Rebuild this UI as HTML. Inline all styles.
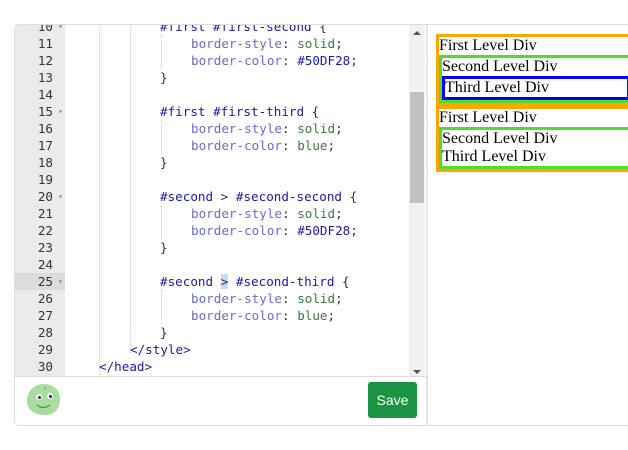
<!DOCTYPE html>
<html><head><style>
body{margin:0;width:628px;height:450px;background:#fff;overflow:hidden;position:relative;font-family:"Liberation Sans",sans-serif}
.box{position:absolute;left:14px;top:24px;width:620px;height:400px;border:1px solid #ddd;border-radius:5px;overflow:hidden}
.gut{position:absolute;left:0;top:0;width:50px;height:351px;background:#ebebeb}
.code{position:absolute;left:0;top:-7px;width:395px;height:358px;overflow:hidden;font-family:"DejaVu Sans Mono",monospace;font-size:12.6px}
.ln{height:17px;line-height:17px;white-space:pre;position:relative}
.n{display:inline-block;width:50px;text-align:right;padding-right:12px;box-sizing:border-box;color:#333;position:relative}
.n.f:after{content:"▾";position:absolute;right:2px;font-size:8px;color:#888}
.hl .n{background:#dcdcdc}
.t{position:absolute;left:84px;top:0}
.s{color:#1a1aa6}.p{color:#6a6acd}.v{color:#3a7a3a}.b{color:#333}
.g{position:absolute;width:0;border-left:1px dotted #ccc}
.sb{position:absolute;left:394px;top:0;width:16px;height:351px;background:#f1f1f1}
.th{position:absolute;left:395px;top:67px;width:14px;height:111px;background:#c1c1c1}
.bot{position:absolute;left:0;top:351px;width:411px;height:49px;border-top:1px solid #ddd}
.save{position:absolute;left:353px;top:5px;width:49px;height:36px;background:#1a9443;border-radius:3px;color:#fff;font-size:14px;line-height:36px;text-align:center}
.div{position:absolute;left:411px;top:0;width:2px;height:400px;background:#e5e5e5}
.pv{position:absolute;left:436px;top:34px;width:200px;font-family:"Liberation Serif",serif;font-size:16px;line-height:18px;color:#000}
.o{border:3px solid orange}.gr{border:3px solid #50DF28}.bl{border:3px solid blue}
</style></head><body>
<div class="box">
<div class="gut"></div>
<div class="code">
<div class="g" style="left:84px;top:0;height:359px"></div>
<div class="g" style="left:115px;top:0;height:335px"></div>
<div class="g" style="left:146px;top:17px;height:34px"></div>
<div class="g" style="left:146px;top:102px;height:34px"></div>
<div class="g" style="left:146px;top:187px;height:34px"></div>
<div class="g" style="left:146px;top:272px;height:34px"></div>
<div class="ln"><span class="n f">10</span><span class="t" style="left:145px"><span class="s">#first #first-second</span> <span class="b">{</span></span></div>
<div class="ln"><span class="n">11</span><span class="t" style="left:176px"><span class="p">border-style</span><span class="b">:</span> <span class="v">solid</span><span class="b">;</span></span></div>
<div class="ln"><span class="n">12</span><span class="t" style="left:176px"><span class="p">border-color</span><span class="b">:</span> <span class="s">#50DF28</span><span class="b">;</span></span></div>
<div class="ln"><span class="n">13</span><span class="t" style="left:145px"><span class="b">}</span></span></div>
<div class="ln"><span class="n">14</span></div>
<div class="ln"><span class="n f">15</span><span class="t" style="left:145px"><span class="s">#first #first-third</span> <span class="b">{</span></span></div>
<div class="ln"><span class="n">16</span><span class="t" style="left:176px"><span class="p">border-style</span><span class="b">:</span> <span class="v">solid</span><span class="b">;</span></span></div>
<div class="ln"><span class="n">17</span><span class="t" style="left:176px"><span class="p">border-color</span><span class="b">:</span> <span class="v">blue</span><span class="b">;</span></span></div>
<div class="ln"><span class="n">18</span><span class="t" style="left:145px"><span class="b">}</span></span></div>
<div class="ln"><span class="n">19</span></div>
<div class="ln"><span class="n f">20</span><span class="t" style="left:145px"><span class="s">#second</span> <span class="b">&gt;</span> <span class="s">#second-second</span> <span class="b">{</span></span></div>
<div class="ln"><span class="n">21</span><span class="t" style="left:176px"><span class="p">border-style</span><span class="b">:</span> <span class="v">solid</span><span class="b">;</span></span></div>
<div class="ln"><span class="n">22</span><span class="t" style="left:176px"><span class="p">border-color</span><span class="b">:</span> <span class="s">#50DF28</span><span class="b">;</span></span></div>
<div class="ln"><span class="n">23</span><span class="t" style="left:145px"><span class="b">}</span></span></div>
<div class="ln"><span class="n">24</span></div>
<div class="ln hl"><span class="n f">25</span><span class="t" style="left:145px"><span class="s">#second</span> <span class="b" style="background:#c6dcf5">&gt;</span> <span class="s">#second-third</span> <span class="b">{</span></span></div>
<div class="ln"><span class="n">26</span><span class="t" style="left:176px"><span class="p">border-style</span><span class="b">:</span> <span class="v">solid</span><span class="b">;</span></span></div>
<div class="ln"><span class="n">27</span><span class="t" style="left:176px"><span class="p">border-color</span><span class="b">:</span> <span class="v">blue</span><span class="b">;</span></span></div>
<div class="ln"><span class="n">28</span><span class="t" style="left:145px"><span class="b">}</span></span></div>
<div class="ln"><span class="n">29</span><span class="t" style="left:115px"><span class="s">&lt;/style&gt;</span></span></div>
<div class="ln"><span class="n">30</span><span class="t" style="left:84px"><span class="s">&lt;/head&gt;</span></span></div>
</div>
<div class="sb"><div style="position:absolute;left:4px;top:6px;border:4px solid transparent;border-bottom:4px solid #555;border-top:0"></div><div style="position:absolute;left:4px;top:345px;border:4px solid transparent;border-top:4px solid #555;border-bottom:0"></div></div>
<div class="th"></div>
<div class="bot">
<svg style="position:absolute;left:10px;top:5px" width="38" height="36" viewBox="0 0 38 36"><path d="M19 2C29 2 36 9 35 19C34 29 27 34 17 33C7 32 1 26 2 17C3 8 10 2 19 2Z" fill="#a8dca0"/><circle cx="14" cy="15" r="3" fill="#fff"/><circle cx="25" cy="14" r="3" fill="#fff"/><circle cx="14.5" cy="15.5" r="1.5" fill="#222"/><circle cx="25.5" cy="14.5" r="1.5" fill="#222"/><path d="M12 23Q18 28 25 23" stroke="#5a8a5a" stroke-width="1.3" fill="none"/><circle cx="20" cy="6" r="1" fill="#6a9a6a"/></svg>
<div class="save">Save</div>
</div>
<div class="div"></div>
</div>
<div class="pv">
<div class="o">First Level Div<div class="gr">Second Level Div<div class="bl">Third Level Div</div></div></div>
<div class="o">First Level Div<div class="gr">Second Level Div<div>Third Level Div</div></div></div>
</div>
</body></html>
